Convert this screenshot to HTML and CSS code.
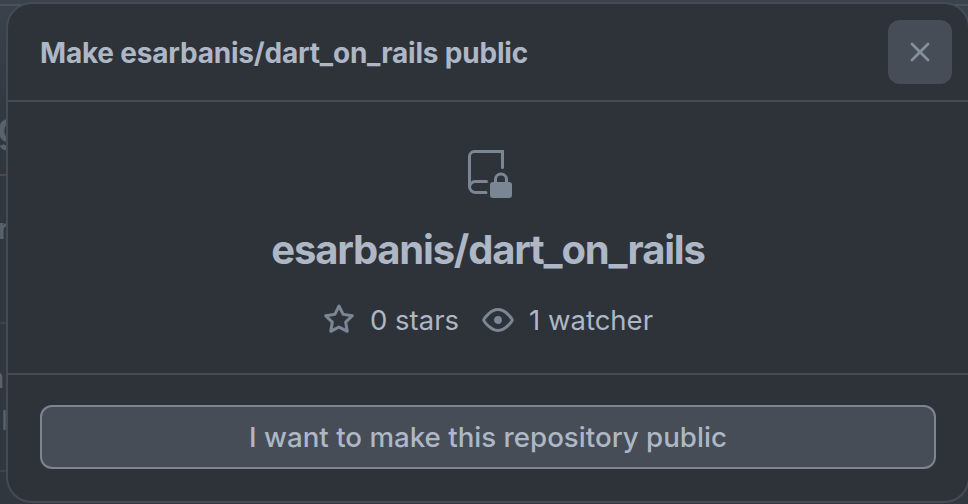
FILE: index.html
```html
<!DOCTYPE html>
<html lang="en">
<head>
  <meta charset="UTF-8" />
  <meta name="viewport" content="width=device-width, initial-scale=1.0"/>
  <title>Make esarbanis/dart_on_rails public</title>
  <link rel="stylesheet" href="styles.css">
</head>
<body>
  <!-- Dimmed page behind the dialog -->
  <div class="backdrop" aria-hidden="true">
    <div class="rule rule-top"></div>
    <span class="peek peek-title">g</span>
    <div class="rule rule-danger"></div>
    <span class="peek peek-r">r</span>
    <div class="rule rule-middle"></div>
    <span class="peek peek-n">n</span>
    <span class="peek peek-al">al</span>
    <div class="rule rule-bottom"></div>
  </div>

  <div class="dialog" role="dialog" aria-labelledby="dialog-title">
    <header class="dialog-header">
      <h1 id="dialog-title">Make esarbanis/dart_on_rails public</h1>
      <button class="close" aria-label="Close">
        <svg width="32" height="32" viewBox="0 0 32 32" fill="none" stroke="currentColor" stroke-width="2.8" stroke-linecap="round">
          <path d="M8 8l16 16M24 8L8 24"/>
        </svg>
      </button>
    </header>

    <section class="summary">
      <svg class="repo-icon" width="48" height="48" viewBox="0 0 48 48" fill="none" stroke="currentColor" stroke-width="3" stroke-linecap="round">
        <path d="M38.5 17.5v-16h-28a5 5 0 0 0-5 5v30a6 6 0 0 0 6 6h10.5M5.5 37.5a6 6 0 0 1 6-6h11"/>
        <path d="M31.5 34v-4.5a5.5 5.5 0 0 1 11 0v4.5"/>
        <rect x="26" y="32" width="22" height="16" rx="3" fill="currentColor" stroke="none"/>
      </svg>
      <h2>esarbanis/dart_on_rails</h2>
      <div class="stats">
        <span class="stat">
          <svg width="32" height="32" viewBox="0 0 16 16" fill="currentColor"><path d="M8 .25a.75.75 0 0 1 .673.418l1.882 3.815 4.21.612a.75.75 0 0 1 .416 1.279l-3.046 2.97.719 4.192a.751.751 0 0 1-1.088.791L8 12.347l-3.766 1.98a.75.75 0 0 1-1.088-.79l.72-4.194L.818 6.374a.75.75 0 0 1 .416-1.28l4.21-.611L7.327.668A.75.75 0 0 1 8 .25Zm0 2.445L6.615 5.5a.75.75 0 0 1-.564.41l-3.097.45 2.24 2.184a.75.75 0 0 1 .216.664l-.528 3.084 2.769-1.456a.75.75 0 0 1 .698 0l2.77 1.456-.53-3.084a.75.75 0 0 1 .216-.664l2.24-2.183-3.096-.45a.75.75 0 0 1-.564-.41L8 2.694Z"/></svg>
          <span>0 stars</span>
        </span>
        <span class="stat">
          <svg width="32" height="32" viewBox="0 0 16 16" fill="currentColor"><path d="M8 2c1.981 0 3.671.992 4.933 2.078 1.27 1.091 2.187 2.345 2.637 3.023a1.62 1.62 0 0 1 0 1.798c-.45.678-1.367 1.932-2.637 3.023C11.67 13.008 9.981 14 8 14c-1.981 0-3.671-.992-4.933-2.078C1.797 10.83.88 9.576.43 8.898a1.62 1.62 0 0 1 0-1.798c.45-.677 1.367-1.931 2.637-3.022C4.33 2.992 6.019 2 8 2ZM1.679 7.932a.12.12 0 0 0 0 .136c.411.622 1.241 1.75 2.366 2.717C5.176 11.758 6.527 12.5 8 12.5c1.473 0 2.825-.742 3.955-1.715 1.124-.967 1.954-2.096 2.366-2.717a.12.12 0 0 0 0-.136c-.412-.621-1.242-1.75-2.366-2.717C10.824 4.242 9.473 3.5 8 3.5c-1.473 0-2.825.742-3.955 1.715-1.124.967-1.954 2.096-2.366 2.717ZM8 10a2 2 0 1 1-.001-3.999A2 2 0 0 1 8 10Z"/></svg>
          <span>1 watcher</span>
        </span>
      </div>
    </section>

    <footer class="dialog-footer">
      <button class="confirm">I want to make this repository public</button>
    </footer>
  </div>
</body>
</html>
```

FILE: styles.css
```css
* { box-sizing: border-box; margin: 0; padding: 0; }
body {
  height: 504px; overflow: hidden; position: relative;
  font-family: Inter, "Liberation Sans", sans-serif;
  background: #30373f; color: #adb7c5;
}
button { font: inherit; color: inherit; border: none; cursor: pointer; }
svg { display: block; flex: none; }

/* Page behind the dialog */
.backdrop {
  position: absolute; inset: 0; overflow: hidden;
  background: linear-gradient(#3a424c 0, #343c45 70px, #30373f 130px);
}
.rule { position: absolute; left: 0; right: 0; height: 2px; background: #3c434c; }
.rule-top { top: 4px; background: #4a515b; }
.rule-danger { top: 174px; background: #56434b; }
.rule-middle { top: 322px; }
.rule-bottom { top: 470px; }
.peek { position: absolute; line-height: 1; color: #59616b; font-weight: 600; }
.peek-title { left: -3px; top: 106px; font-size: 42px; }
.peek-r { left: -2px; top: 215px; font-size: 28px; }
.peek-n { left: -13px; top: 364px; font-size: 28px; }
.peek-al { left: -14px; top: 407px; font-size: 27px; font-weight: 400; }

/* Dialog */
.dialog {
  position: relative; width: 964px; height: 501px; margin: 2px 0 0 6px;
  display: flex; flex-direction: column;
  background: #2e333a; border: 2px solid #454b54; border-radius: 26px;
}
.dialog-header {
  height: 98px; padding: 0 16px 0 32px;
  display: flex; align-items: center; justify-content: space-between;
  border-bottom: 2px solid #454b54;
}
.dialog-header h1 {
  padding-top: 2px; font-size: 28px; line-height: 36px; font-weight: 650;
  letter-spacing: -0.2px; white-space: nowrap;
}
.close {
  width: 64px; height: 64px; border-radius: 12px;
  display: flex; align-items: center; justify-content: center;
  background: #464d57; color: #858e9b;
}
.summary {
  height: 273px; padding-top: 48px;
  display: flex; flex-direction: column; align-items: center;
  border-bottom: 2px solid #454b54;
}
.repo-icon { color: #7b8694; }
.summary h2 {
  margin-top: 28px; font-size: 40px; line-height: 48px; font-weight: 650;
  letter-spacing: -1.2px; white-space: nowrap;
}
.stats { display: flex; gap: 23px; margin-top: 30px; }
.stat { display: flex; align-items: flex-start; gap: 15px; font-size: 27.5px; line-height: 32px; }
.stat svg { color: #7b8694; }
.dialog-footer { padding: 30px 32px 0; }
.confirm {
  width: 100%; height: 64px; border: 2px solid #7d8591; border-radius: 12px;
  background: #464d57; font-size: 27.7px; font-weight: 500; white-space: nowrap;
}
```
